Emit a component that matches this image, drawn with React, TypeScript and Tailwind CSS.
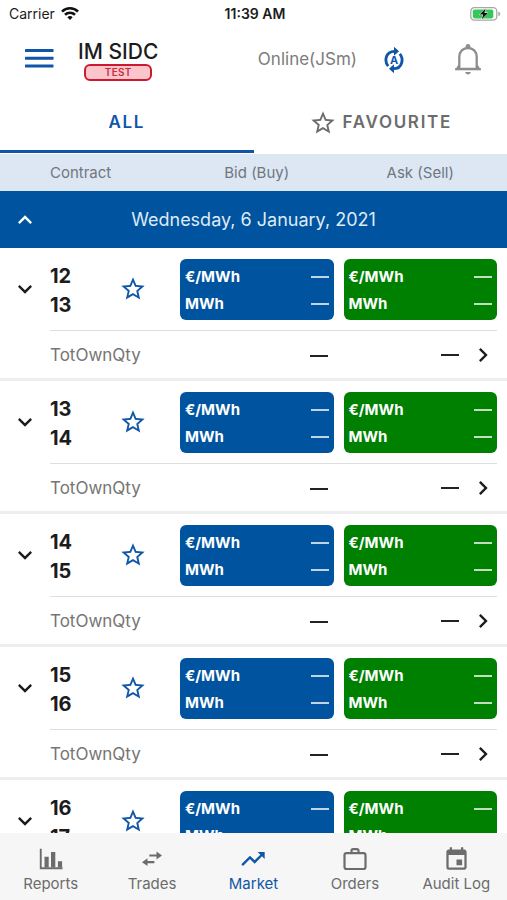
import { useState } from 'react';
import {
  MdEvent,
  MdKeyboardArrowDown,
  MdKeyboardArrowRight,
  MdKeyboardArrowUp,
  MdStarBorder,
  MdTrendingUp,
} from 'react-icons/md';

const contracts = [
  { from: '12', to: '13' },
  { from: '13', to: '14' },
  { from: '14', to: '15' },
  { from: '15', to: '16' },
  { from: '16', to: '17' },
];

const WifiIcon = () => (
  <svg viewBox="0 0 18 14" className="w-[18px] h-[14px]" fill="none" stroke="#111" strokeWidth="2.6">
    <path d="M1 4.6a11.4 11.4 0 0 1 16 0" />
    <path d="M4 7.8a7.2 7.2 0 0 1 10 0" />
    <path d="M9 13 6.3 10.3a3.9 3.9 0 0 1 5.4 0z" fill="#111" stroke="none" />
  </svg>
);

const BatteryIcon = () => (
  <svg viewBox="0 0 31 14" className="w-[31px] h-[14px]">
    <rect x="0.8" y="0.7" width="26" height="12.4" rx="3.6" fill="#fff" stroke="#a8a8a8" strokeWidth="1.3" />
    <rect x="2.8" y="2.4" width="20.5" height="9" rx="1.8" fill="#34c759" />
    <path d="M28.3 4.7c1.4.4 2 1.2 2 2.2s-.6 1.8-2 2.2z" fill="#a8a8a8" />
    <path d="M15.6 1.6 9.6 7.6h3.6l-1.4 4.6 6.2-6.2h-3.6z" fill="#111" stroke="#fff" strokeWidth="1" paintOrder="stroke" />
  </svg>
);

const MenuIcon = () => (
  <svg viewBox="0 0 30 26" className="w-[30px] h-[26px]" fill="#0f56a8">
    <rect x="1" y="2" width="28.5" height="3" rx="0.5" />
    <rect x="1" y="9.8" width="28.5" height="3" rx="0.5" />
    <rect x="1" y="17.5" width="28.5" height="3" rx="0.5" />
  </svg>
);

const AutoSyncIcon = () => (
  <svg viewBox="0 0 22 28" className="w-[22px] h-[28px]" fill="none">
    <path d="M4.2 20.2C.2 15.5 1.2 5.300 10.500 5.300" stroke="#0f56a8" strokeWidth="2.8" />
    <path d="M15.800 7.800C19.800 12.500 18.800 22.700 9.500 22.700" stroke="#0f56a8" strokeWidth="2.8" />
    <path d="M10 .8v9l5-4.500z" fill="#0f56a8" />
    <path d="M10 18.200v9l-5-4.500z" fill="#0f56a8" />
    <text x="10" y="18" textAnchor="middle" fill="#0f56a8" fontSize="11" fontWeight="700" fontFamily="Inter, sans-serif">A</text>
  </svg>
);

const BellIcon = () => (
  <svg viewBox="0 0 28 35" className="w-[28px] h-[35px]" fill="none">
    <path d="M5.3 25.2V14C5.3 8.4 9 5 14 5s8.7 3.4 8.7 9v11.2" stroke="#8e8e8e" strokeWidth="2.3" />
    <path d="M5.3 22 3 25.8h22L22.7 22" stroke="#8e8e8e" strokeWidth="2" />
    <path d="M1.2 25h25.6v2.3H1.2z" fill="#8e8e8e" />
    <circle cx="14" cy="3.4" r="2.4" fill="#8e8e8e" />
    <path d="M11.200 29h5.600c-.3 1.500-1.400 2.500-2.800 2.500s-2.500-1-2.800-2.500z" fill="#8e8e8e" />
  </svg>
);

const ReportsIcon = () => (
  <svg viewBox="0 0 24 22" className="w-[24px] h-[22px]" fill="currentColor">
    <path d="M.8.800h1.900v18.400h20.800v2H.8z" />
    <path d="M5.500 8.800h4.200v10.800H5.500zM12 4h4.300v15.600H12zM18.900 13.300h4.200v6.300h-4.200z" />
  </svg>
);

const TradesIcon = () => (
  <svg viewBox="0 0 20 16" className="w-[20px] h-[16px]" fill="currentColor">
    <path d="M7.3 3.400h7.2V.6L20 4.500l-5.500 3.900V5.600H7.300z" />
    <path d="M12.400 10.100H5.500V7.300L0 11.200l5.500 3.900v-2.800h6.900z" />
  </svg>
);

const OrdersIcon = () => (
  <svg viewBox="0 0 24 24" className="w-[24px] h-[24px]" fill="none" stroke="currentColor" strokeWidth="2.2">
    <rect x="1.5" y="6.2" width="21" height="15.800" rx="2" />
    <path d="M8.5 6.200V3.800c0-1 .7-1.700 1.700-1.700h3.600c1 0 1.700.7 1.700 1.700v2.400" />
  </svg>
);

const navItems = [
  { label: 'Reports', icon: <ReportsIcon /> },
  { label: 'Trades', icon: <TradesIcon /> },
  { label: 'Market', icon: <MdTrendingUp size={28} /> },
  { label: 'Orders', icon: <OrdersIcon /> },
  { label: 'Audit Log', icon: <MdEvent size={27} /> },
];

const Quote = ({ color }: { color: string }) => (
  <div className={`rounded-md h-[61px] px-[5px] py-1 text-white text-[15px] font-bold leading-[27px] ${color}`}>
    {['€/MWh', 'MWh'].map((unit) => (
      <div key={unit} className="flex items-center justify-between">
        <span>{unit}</span>
        <span className="w-[18px] h-[2px] mt-px bg-white/75" />
      </div>
    ))}
  </div>
);

const Dash = () => <span className="inline-block align-middle w-[18px] h-[2px] bg-[#222]" />;

const App = () => {
  const [tab, setTab] = useState('all');
  const [active, setActive] = useState('Market');
  const [open, setOpen] = useState(true);

  return (
    <div className="h-screen flex flex-col bg-white text-[#1c1c1c] font-[Inter,sans-serif]">
      {/* Status bar */}
      <div className="grid grid-cols-3 items-center h-7 pl-[9px] pr-[6px] text-sm">
        <div className="flex items-center gap-[6px]">
          <span>Carrier</span>
          <WifiIcon />
        </div>
        <span className="text-center font-semibold">11:39 AM</span>
        <div className="flex justify-end">
          <BatteryIcon />
        </div>
      </div>

      <header className="flex items-center h-16 px-6">
        <button aria-label="Menu">
          <MenuIcon />
        </button>
        <div className="ml-6 flex flex-col items-center">
          <h1 className="text-[21px] leading-6 font-medium">IM SIDC</h1>
          <span className="w-[68px] h-[17px] rounded-md border-2 border-[#cb1a30] bg-[#fbc5cc] text-[#cb2a42] text-[10px] leading-[13px] font-semibold tracking-wide text-center">
            TEST
          </span>
        </div>
        <span className="ml-auto text-[17px] text-[#7c7c7c]">Online(JSm)</span>
        <button aria-label="Auto refresh" className="ml-[27px]">
          <AutoSyncIcon />
        </button>
        <button aria-label="Notifications" className="ml-12 mr-px">
          <BellIcon />
        </button>
      </header>

      <div className="grid grid-cols-2 h-[62px] pb-px text-[17px] font-semibold tracking-widest">
        <button
          onClick={() => setTab('all')}
          className={`pt-1 border-b-[3px] ${tab === 'all' ? 'text-[#0f56a8] border-[#0f56a8]' : 'text-[#6c6c6c] border-transparent'}`}
        >
          ALL
        </button>
        <button
          onClick={() => setTab('favourite')}
          className={`pt-1 flex items-center justify-center gap-[6px] border-b-[3px] ${tab === 'favourite' ? 'text-[#0f56a8] border-[#0f56a8]' : 'text-[#6c6c6c] border-transparent'}`}
        >
          <MdStarBorder size={28} />
          FAVOURITE
        </button>
      </div>

      <main className="flex-1 min-h-0 overflow-y-auto [scrollbar-width:none]">
        <table className="w-full table-fixed border-separate border-spacing-0">
          <colgroup>
            <col className="w-[50px]" />
            <col className="w-[130px]" />
            <col />
            <col />
            <col className="w-[10px]" />
          </colgroup>
          <thead>
            <tr className="h-[37px] bg-[#dde6f3] text-[15px] text-[#6f7780]">
              <td />
              <th className="pt-[2px] font-normal text-left">Contract</th>
              <th className="pt-[2px] font-normal pr-[5px]">Bid (Buy)</th>
              <th className="pt-[2px] font-normal pl-[5px]">Ask (Sell)</th>
              <td />
            </tr>
          </thead>
          <tbody>
            <tr className="h-[57px] bg-[#00549f] text-white">
              <td>
                <button aria-label="Toggle day" onClick={() => setOpen(!open)} className="block mx-auto">
                  {open ? <MdKeyboardArrowUp size={28} /> : <MdKeyboardArrowDown size={28} />}
                </button>
              </td>
              <th colSpan={3} className="pr-10 text-lg font-normal text-[#dfeaf6]">
                Wednesday, 6 January, 2021
              </th>
              <td />
            </tr>
          </tbody>
          {open &&
            contracts.map((c) => (
              <tbody key={c.from}>
                <tr className="h-[82px]">
                  <td>
                    <button aria-label="Expand" className="block mx-auto">
                      <MdKeyboardArrowDown size={28} />
                    </button>
                  </td>
                  <td>
                    <div className="flex items-center justify-between pr-[33px]">
                      <div className="pt-[3px] text-xl leading-[29px] font-bold">
                        <div>{c.from}</div>
                        <div>{c.to}</div>
                      </div>
                      <button aria-label="Add to favourites" className="text-[#0f56a8]">
                        <MdStarBorder size={28} />
                      </button>
                    </div>
                  </td>
                  <td className="pr-[5px]">
                    <Quote color="bg-[#00549f]" />
                  </td>
                  <td className="pl-[5px]">
                    <Quote color="bg-[#008000]" />
                  </td>
                  <td />
                </tr>
                <tr className="h-[51px]">
                  <td className="border-b-[3px] border-b-[#eeeeee]" />
                  <td className="pt-[3px] border-t border-t-[#dedede] border-b-[3px] border-b-[#eeeeee] text-[17px] text-[#757575]">TotOwnQty</td>
                  <td className="border-t border-t-[#dedede] border-b-[3px] border-b-[#eeeeee] text-right pr-[11px]">
                    <Dash />
                  </td>
                  <td className="border-t border-t-[#dedede] border-b-[3px] border-b-[#eeeeee]">
                    <div className="flex items-center justify-end gap-[10px]">
                      <Dash />
                      <button aria-label="Details">
                        <MdKeyboardArrowRight size={28} />
                      </button>
                    </div>
                  </td>
                  <td className="border-b-[3px] border-b-[#eeeeee]" />
                </tr>
              </tbody>
            ))}
        </table>
      </main>

      <nav className="grid grid-cols-5 h-[67px] bg-[#f6f6f6] text-[15px]">
        {navItems.map((item) => (
          <button
            key={item.label}
            onClick={() => setActive(item.label)}
            className={`flex flex-col items-center pt-3 ${active === item.label ? 'text-[#0f56a8]' : 'text-[#6c6c6c]'}`}
          >
            <span className="h-7 flex items-center">{item.icon}</span>
            <span className="leading-[22px]">{item.label}</span>
          </button>
        ))}
      </nav>
    </div>
  );
};

export default App;
